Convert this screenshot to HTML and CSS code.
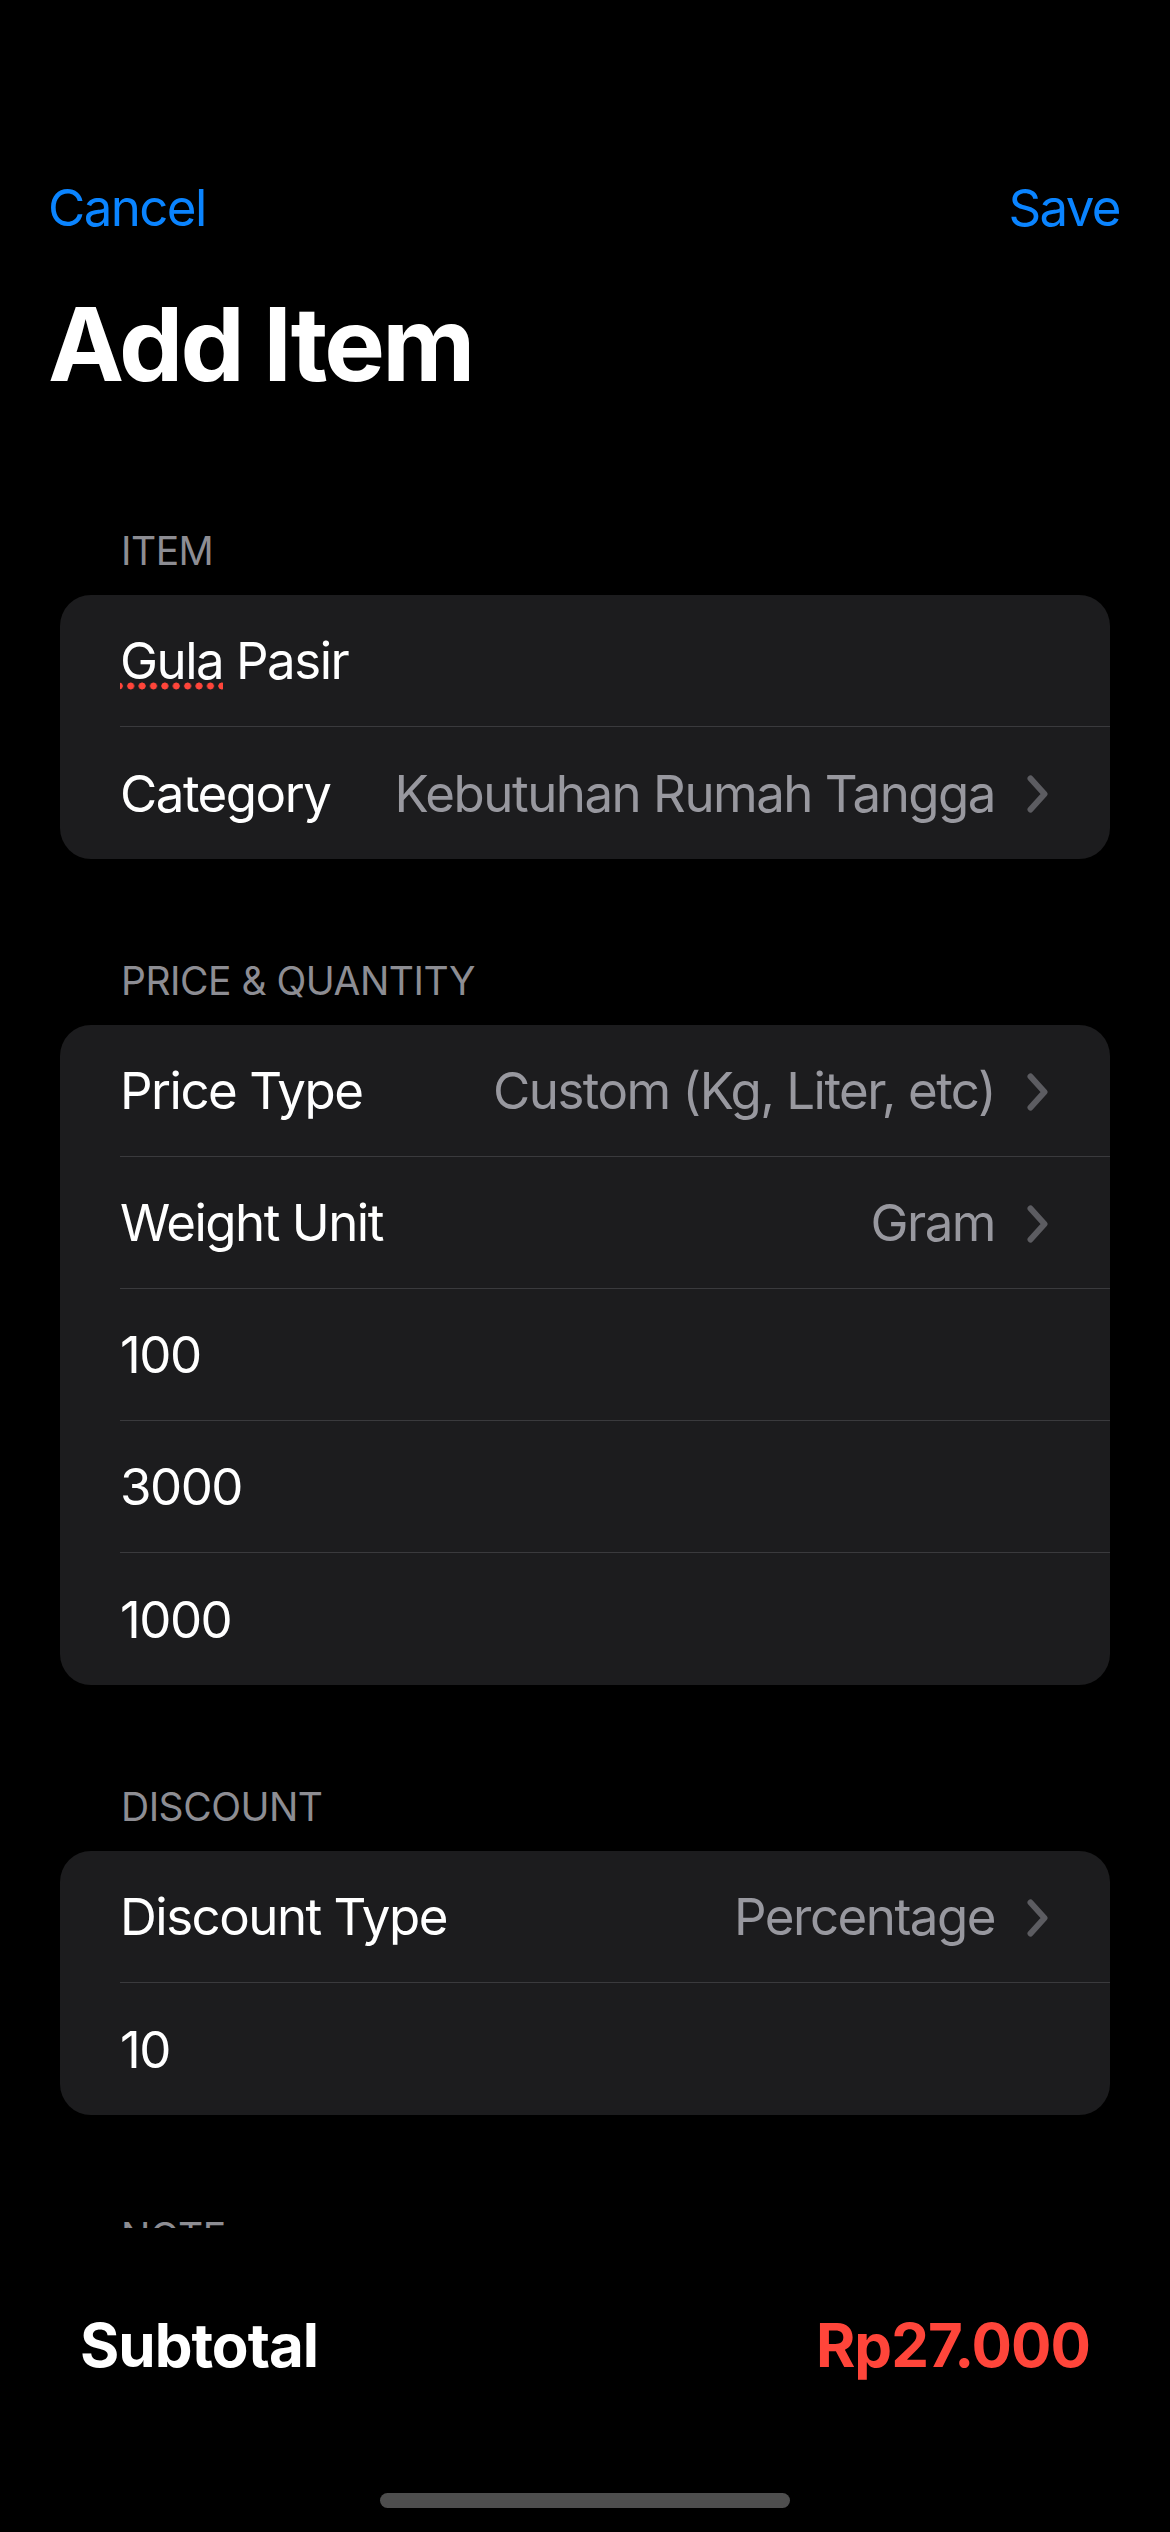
FILE: index.html
```html
<!DOCTYPE html>
<html lang="en">
<head>
<meta charset="utf-8">
<title>Add Item</title>
<link rel="stylesheet" href="styles.css">
</head>
<body>
<div class="screen">
  <div class="scroll">
    <div class="status"></div>
    <nav class="nav">
      <span class="nav-btn">Cancel</span>
      <span class="nav-btn">Save</span>
    </nav>
    <h1 class="title">Add Item</h1>

    <section class="section">
      <h2 class="section-head">Item</h2>
      <div class="card">
        <div class="row"><span class="label"><span class="misspelled">Gula</span> Pasir</span></div>
        <div class="row">
          <span class="label">Category</span>
          <span class="value">Kebutuhan Rumah Tangga</span>
          <svg class="chev" width="21" height="38" viewBox="0 0 21 38"><path d="M3.5 3.5 L17.5 19 L3.5 34.5" fill="none" stroke="#5c5c61" stroke-width="6" stroke-linecap="round" stroke-linejoin="round"/></svg>
        </div>
      </div>
    </section>

    <section class="section">
      <h2 class="section-head">Price &amp; Quantity</h2>
      <div class="card">
        <div class="row">
          <span class="label">Price Type</span>
          <span class="value">Custom (Kg, Liter, etc)</span>
          <svg class="chev" width="21" height="38" viewBox="0 0 21 38"><path d="M3.5 3.5 L17.5 19 L3.5 34.5" fill="none" stroke="#5c5c61" stroke-width="6" stroke-linecap="round" stroke-linejoin="round"/></svg>
        </div>
        <div class="row">
          <span class="label">Weight Unit</span>
          <span class="value">Gram</span>
          <svg class="chev" width="21" height="38" viewBox="0 0 21 38"><path d="M3.5 3.5 L17.5 19 L3.5 34.5" fill="none" stroke="#5c5c61" stroke-width="6" stroke-linecap="round" stroke-linejoin="round"/></svg>
        </div>
        <div class="row"><span class="label">100</span></div>
        <div class="row"><span class="label">3000</span></div>
        <div class="row"><span class="label">1000</span></div>
      </div>
    </section>

    <section class="section">
      <h2 class="section-head">Discount</h2>
      <div class="card">
        <div class="row">
          <span class="label">Discount Type</span>
          <span class="value">Percentage</span>
          <svg class="chev" width="21" height="38" viewBox="0 0 21 38"><path d="M3.5 3.5 L17.5 19 L3.5 34.5" fill="none" stroke="#5c5c61" stroke-width="6" stroke-linecap="round" stroke-linejoin="round"/></svg>
        </div>
        <div class="row"><span class="label">10</span></div>
      </div>
    </section>

    <section class="section">
      <h2 class="section-head">Note</h2>
    </section>
  </div>

  <footer class="footer">
    <div class="total">
      <span class="total-label">Subtotal</span>
      <span class="total-value">Rp27.000</span>
    </div>
    <div class="home"></div>
  </footer>
</div>
</body>
</html>
```

FILE: styles.css
```css
* { box-sizing: border-box; }

html, body {
  margin: 0;
  padding: 0;
  background: #000;
}

body {
  font-family: Inter, "Liberation Sans", sans-serif;
  color: #fff;
}

.screen {
  width: 1170px;
  height: 2532px;
  display: flex;
  flex-direction: column;
  overflow: hidden;
}

.scroll {
  height: 2228px;
  flex: none;
  overflow: hidden;
}

.status {
  height: 141px;
}

.nav {
  height: 132px;
  display: flex;
  align-items: center;
  justify-content: space-between;
  padding: 0 50px 0 48px;
}

.nav-btn {
  font-size: 51px;
  color: #0a84ff;
  letter-spacing: -1.6px;
}

.title {
  margin: 10px 0 0 48px;
  font-size: 102px;
  line-height: 122px;
  font-weight: 700;
  letter-spacing: -2.8px;
}

.section {
  margin: 0 60px;
}

.section:first-of-type {
  margin-top: 123px;
}

.section + .section {
  margin-top: 99px;
}

.section-head {
  margin: 0 0 21px 61px;
  font-size: 39px;
  line-height: 46px;
  font-weight: 400;
  text-transform: uppercase;
  color: #8d8d93;
  letter-spacing: -0.5px;
}

.card {
  background: #1c1c1e;
  border-radius: 31px;
  padding-left: 60px;
}

.row {
  height: 132px;
  display: flex;
  align-items: center;
  padding-right: 62px;
  border-bottom: 1px solid #3a3a3d;
  font-size: 51px;
  letter-spacing: -1.5px;
}

.row:last-child {
  border-bottom: none;
}

.label {
  flex: 1;
  color: #fff;
  white-space: nowrap;
}

.value {
  color: #98989f;
  white-space: nowrap;
}

.chev {
  flex: none;
  margin-left: 32px;
  margin-top: 2px;
}

.misspelled {
  background-image: radial-gradient(circle at center, #ff453a 3.2px, transparent 3.8px);
  background-size: 11.4px 8px;
  background-repeat: repeat-x;
  background-position: 5px calc(100% - 1px);
}

.footer {
  flex: 1;
  background: #000;
  display: flex;
  flex-direction: column;
  padding-top: 57px;
}

.total {
  height: 120px;
  display: flex;
  align-items: center;
  justify-content: space-between;
  padding: 0 80px 0 80px;
  font-size: 60px;
  font-weight: 700;
  letter-spacing: -1px;
}

.total-value {
  color: #ff453a;
}

.home {
  margin-top: auto;
  margin-bottom: 24px;
  align-self: center;
  width: 410px;
  height: 15px;
  border-radius: 8px;
  background: #4e4e4e;
}
```
